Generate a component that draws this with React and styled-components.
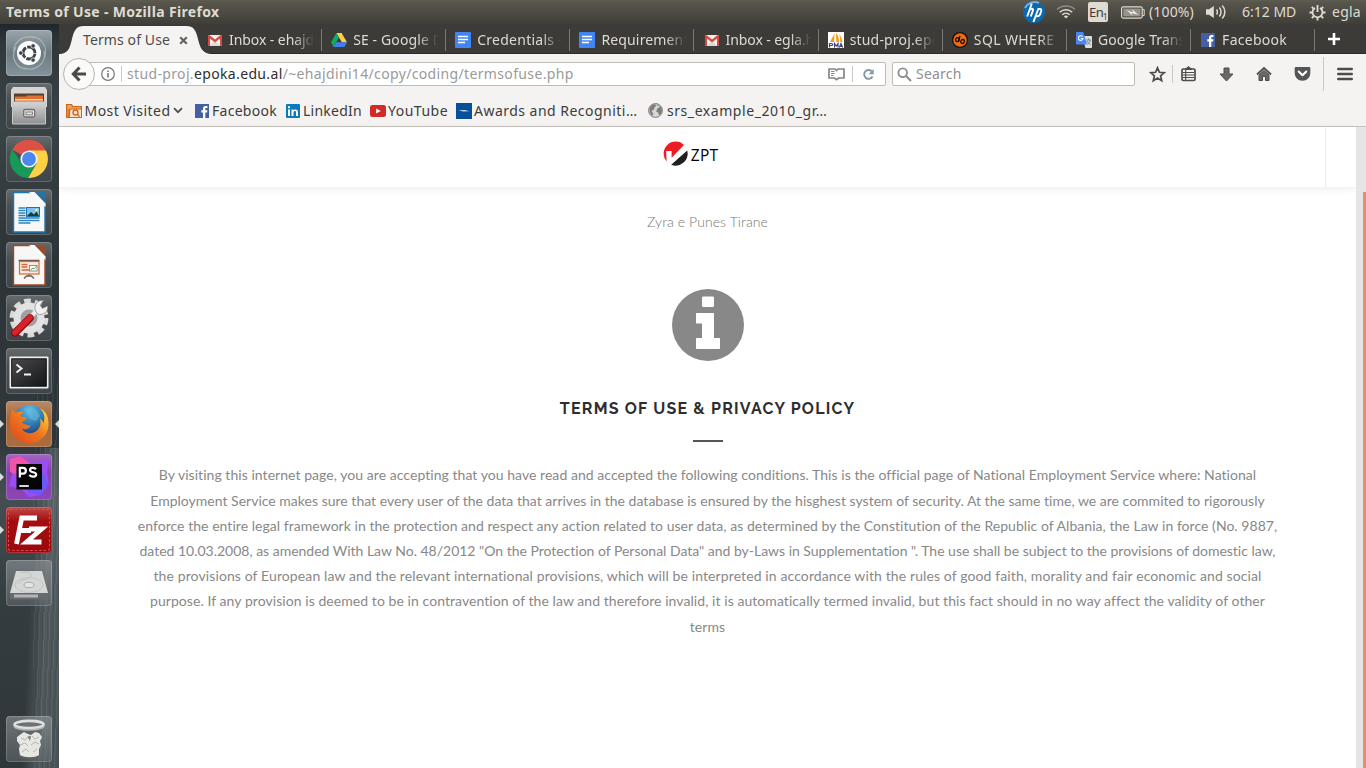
import React from "react";
import styled, { createGlobalStyle, css } from "styled-components";

const UI = `"Noto Sans", "Open Sans", sans-serif`;

const GlobalStyle = createGlobalStyle`
  * { box-sizing: border-box; }
  body { margin: 0; overflow: hidden; background: #fff; }
  svg { display: block; flex: none; }
`;

/* ---------- Shell ---------- */

const Desktop = styled.div`
  width: 1366px;
  height: 768px;
  display: flex;
  flex-direction: column;
  font: 14px/20px ${UI};
  color: #3c3c3c;
`;

const MenuBar = styled.header`
  height: 24px;
  display: flex;
  align-items: center;
  padding: 0 5px 0 6px;
  background: linear-gradient(#5f5d51 0, #57554b 3px, #3f3e39 100%);
  color: #dfdbd2;
`;

const WindowTitle = styled.h1`
  flex: 1;
  margin: 0;
  font: 700 14px/24px ${UI};
  letter-spacing: 0.35px;
`;

const Indicator = styled.div`
  display: flex;
  align-items: center;
  gap: ${(p) => p.$gap || 0}px;
  width: ${(p) => p.$w}px;
  height: 24px;
  white-space: nowrap;
  letter-spacing: ${(p) => p.$ls || 0}px;
`;

const KeyboardBadge = styled.span`
  width: 20px;
  height: 20px;
  border-radius: 2px;
  background: #dfdbd2;
  color: #3c3b37;
  font: 13px/20px ${UI};
  letter-spacing: -0.6px;
  padding-left: 1px;
  sub {
    font-size: 8px;
    line-height: 0;
    vertical-align: -3px;
  }
`;

const Body = styled.div`
  flex: 1;
  display: flex;
  min-height: 0;
`;

/* ---------- Launcher ---------- */

const Launcher = styled.nav`
  width: 59px;
  display: flex;
  flex-direction: column;
  gap: 7px;
  padding: 6px 7px 6px 6px;
  background:
    repeating-linear-gradient(92deg, rgba(255, 255, 255, 0.06) 0 1px, transparent 1px 3px, rgba(0, 0, 0, 0.08) 3px 4px, transparent 4px 5px) 100% 100% / 26px 400px no-repeat,
    linear-gradient(93deg, transparent 0 50%, rgba(125, 135, 138, 0.4) 72%, rgba(110, 120, 123, 0.42) 100%) 0 100% / 100% 320px no-repeat,
    linear-gradient(#20272a 0, #30383b 20px, #3a4346 100px, #2c3437 240px, #30383b 420px, #454f52 470px, #343c40 580px, #2f373a 100%);
`;

const tileTones = {
  glass: "linear-gradient(#666b6d 0, #4a5154 35%, #3f464a 100%)",
  dash: "linear-gradient(#9aa5aa, #6d7b81 50%, #84949a)",
  orange: "linear-gradient(#b98a66, #a4683b 40%, #a96d3f)",
  purple: "linear-gradient(#a068c0, #8740ad 40%, #8c46b5)",
  red: "linear-gradient(#c14a4a, #a40d10 30%, #9a090d)",
  clear: "linear-gradient(rgba(150, 156, 158, 0.6), rgba(105, 112, 115, 0.5))",
};

const Tile = styled.div`
  position: relative;
  width: 46px;
  height: 46px;
  flex: none;
  display: grid;
  place-items: center;
  border-radius: 4px;
  border: 1px solid rgba(255, 255, 255, 0.18);
  background: ${(p) => tileTones[p.$tone || "glass"]};
  background-origin: border-box;
  ${(p) => p.$last && css`margin-top: auto;`}
`;

const Pip = styled.i`
  position: absolute;
  top: 18px;
  ${(p) => (p.$right ? "right: -8px;" : "left: -7px;")}
  border: 4px solid transparent;
  border-${(p) => (p.$right ? "right" : "left")}: 4px solid #d9dcdc;
  ${(p) => (p.$right ? "border-left: 0;" : "border-right: 0;")}
`;

/* ---------- Browser ---------- */

const Browser = styled.main`
  flex: 1;
  min-width: 0;
  display: flex;
  flex-direction: column;
`;

const TabStrip = styled.div`
  height: 30px;
  display: flex;
  align-items: center;
  padding-left: 14px;
  background: #3c3b37;
  border-bottom: 1px solid #2c2b28;
  color: #dfdbd2;
`;

const ActiveTab = styled.div`
  position: relative;
  width: 124.8px;
  height: 30px;
  display: flex;
  align-items: center;
  gap: 9px;
  padding: 3px 0 0 10px;
  color: #4c4c4c;
  letter-spacing: 0.11px;
  white-space: nowrap;
  > svg:first-child {
    position: absolute;
    left: -14px;
    top: 1px;
  }
  > span,
  > svg {
    position: relative;
  }
`;

const Tab = styled.div`
  width: 124.15px;
  height: 22px;
  margin-top: 2px;
  display: flex;
  align-items: center;
  gap: 6px;
  padding-left: 9.2px;
  border-right: 1px solid #7a7872;
`;

const TabLabel = styled.span`
  flex: 1;
  overflow: hidden;
  white-space: nowrap;
  letter-spacing: ${(p) => p.$ls}px;
  margin-right: 7px;
  mask-image: linear-gradient(90deg, #000 calc(100% - 20px), transparent);
`;

const NewTab = styled.div`
  width: 37px;
  display: grid;
  place-items: center;
`;

const Toolbar = styled.div`
  height: 40px;
  display: flex;
  align-items: center;
  padding-left: 4px;
  background: #f4f3f1;
`;

const BackButton = styled.div`
  width: 32px;
  height: 32px;
  flex: none;
  display: grid;
  place-items: center;
  border-radius: 50%;
  border: 1px solid #b8b4ae;
  background: #fafaf9;
  z-index: 1;
`;

const Field = styled.div`
  height: 24px;
  display: flex;
  align-items: center;
  border: 1px solid #bfbbb5;
  border-radius: 2px;
  background: #fff;
  white-space: nowrap;
`;

const UrlField = styled(Field)`
  width: 799px;
  margin: 0 6px 0 -8px;
  padding: 0 10px 0 13px;
`;

const SearchField = styled(Field)`
  width: 243px;
  gap: 4px;
  padding-left: 4px;
  color: #8f8f8f;
  letter-spacing: 0.2px;
`;

const Url = styled.span`
  flex: 1;
  color: #9a9a9a;
  letter-spacing: 0.35px;
  b {
    font-weight: 400;
    color: #2e2e2e;
  }
`;

const Rule = styled.i`
  width: 1px;
  height: ${(p) => p.$h}px;
  margin: 0 ${(p) => p.$r}px 0 ${(p) => p.$l}px;
  background: #cbc8c3;
  flex: none;
`;

const Tools = styled.div`
  display: flex;
  align-items: center;
  padding-left: 3px;
`;

const Tool = styled.div`
  width: 38px;
  display: grid;
  place-items: center;
  color: #4c4c4c;
`;

const BookmarkBar = styled.div`
  height: 33px;
  display: flex;
  align-items: center;
  padding: 1px 0 0 7px;
  background: #f4f3f1;
  border-bottom: 1px solid #c8c3bd;
`;

const Bookmark = styled.div`
  width: ${(p) => p.$w}px;
  display: flex;
  align-items: center;
  gap: ${(p) => p.$gap || 2}px;
  white-space: nowrap;
  letter-spacing: ${(p) => p.$ls}px;
`;

/* ---------- Page ---------- */

const Viewport = styled.div`
  flex: 1;
  min-height: 0;
  display: flex;
  background: #fff;
`;

const Page = styled.div`
  width: 1297px;
  display: flex;
  flex-direction: column;
  align-items: center;
`;

const SiteHeader = styled.div`
  width: 1297px;
  height: 60px;
  display: flex;
  padding-right: 30px;
  box-shadow: 0 2px 8px rgba(0, 0, 0, 0.08);
`;

const Brand = styled.div`
  flex: 1;
  display: flex;
  justify-content: center;
  gap: 3px;
  padding: 14px 0 0 113px;
  padding-left: 0;
  border-right: 1px solid #ebebeb;
  color: #000;
  font: 15.5px/28px "Open Sans", sans-serif;
  letter-spacing: 0.2px;
  > svg {
    margin-left: -3px;
  }
`;

const Tagline = styled.p`
  margin: 22px 0 0;
  font: 300 14px/25px Lato, sans-serif;
  letter-spacing: 0.09px;
  color: #777;
`;

const InfoMark = styled.div`
  margin-top: 55px;
`;

const Heading = styled.h2`
  margin: 36px 0 0;
  font: 700 16px/24px Raleway, Lato, sans-serif;
  letter-spacing: 1.22px;
  color: #2e2e2e;
`;

const Divider = styled.i`
  width: 30px;
  height: 2px;
  margin-top: 19px;
  background: #555;
`;

const Terms = styled.p`
  margin: 20.3px 0 0;
  font: 400 14px/25.2px Lato, sans-serif;
  color: #888;
  text-align: center;
`;

const Line = styled.span`
  display: block;
  white-space: nowrap;
  letter-spacing: ${(p) => p.$ls}px;
`;

const ScrollTrack = styled.div`
  width: 10px;
  padding: 65px 0 0 7px;
  background: #e5e5e5;
`;

const ScrollThumb = styled.div`
  height: 100%;
  background: #ef8c63;
`;

/* ---------- Icons ---------- */

const Gmail = () => (
  <svg width="16" height="16" viewBox="0 0 16 16">
    <rect x="1" y="3" width="14" height="11" rx="1" fill="#f1f0ee" />
    <path d="M3 14 8 9l5 5z" fill="#dcdad7" />
    <path d="M1 4v9.2c0 .5.3.8.8.8H3V6.6l5 4 5-4V14h1.200c.5 0 .8-.3.8-.8V4c0-1-1-1.300-1.700-.8L8 7.500 2.700 3.200C2 2.700 1 3 1 4z" fill="#d54b3d" />
  </svg>
);

const Drive = () => (
  <svg width="16" height="16" viewBox="0 0 16 16">
    <path d="M5.400 1h5.200L16 10.300h-5.200z" fill="#ffcf48" />
    <path d="M5.400 1 0 10.300 2.600 15 8 5.600z" fill="#11a861" />
    <path d="M5.300 10.300H16L13.400 15H2.600z" fill="#3f7ff0" />
  </svg>
);

const Docs = () => (
  <svg width="16" height="16" viewBox="0 0 16 16">
    <rect width="16" height="16" rx="1" fill="#4285f4" />
    <path d="M3 4.500h10M3 7.500h10M3 10.500h7" stroke="#fff" strokeWidth="1.300" />
  </svg>
);

const Pma = () => (
  <svg width="16" height="16" viewBox="0 0 16 16">
    <rect width="16" height="16" fill="#fff" />
    <path d="M6.500 1.500 2 10h4zM8 1l.3 9H11c0-4-1-7-3-9zM11 2c1 3 1.500 5 1.200 8H14.500c-.3-3-1.500-6-3.500-8z" fill="#f89c0e" />
    <path d="M1.500 15.500v-4h2c1.500 0 1.500 2 0 2h-2M6.500 15.500v-4l1.700 2.500L10 11.500v4M11.300 15.500l1.700-4 1.700 4M12 14.300h2" fill="none" stroke="#44447c" strokeWidth="1.200" />
  </svg>
);

const Sql = () => (
  <svg width="16" height="16" viewBox="0 0 16 16">
    <circle cx="8" cy="8" r="7.400" fill="#f26a10" stroke="#111" strokeWidth="1.200" />
    <g fill="none" stroke="#1a0c04" strokeWidth="1.300">
      <ellipse cx="5.300" cy="7.600" rx="1.700" ry="2" transform="rotate(25 5.300 7.600)" />
      <ellipse cx="10.600" cy="9.500" rx="1.700" ry="2" transform="rotate(25 10.600 9.500)" />
      <path d="m6.600 9.800 1.400-6" />
    </g>
  </svg>
);

const Translate = () => (
  <svg width="16" height="16" viewBox="0 0 16 16">
    <path d="M6 4h9.300c.4 0 .7.300.7.700v10.600c0 .4-.3.7-.7.700H9.500z" fill="#dcdcdc" />
    <path d="M10 8h5M12.500 6.500V8M14.300 8c-.5 2-1.500 3.500-3 4.500M11 9c.6 1.500 1.800 2.700 3.500 3.500" stroke="#6b8794" strokeWidth="1" fill="none" />
    <path d="M.7 0h6.600L11 12.500H.7c-.4 0-.7-.3-.7-.7V.7C0 .3.300 0 .7 0z" fill="#4a86f0" />
    <path d="M6.500 4.600A2.300 2.300 0 1 0 7 6.500H4.800" stroke="#fff" strokeWidth="1.100" fill="none" />
  </svg>
);

const FacebookMark = () => (
  <svg width="16" height="16" viewBox="0 0 16 16">
    <rect x="1" y="1" width="14" height="14" fill="#4560a0" />
    <path d="M9 15V9.500H7.300V7.300H9V5.800C9 4 10 3 11.800 3H13.400v2.100h-1.200c-.7 0-.9.300-.9.900v1.300h2.100l-.3 2.200h-1.800V15z" fill="#fff" />
  </svg>
);

const LinkedInMark = () => (
  <svg width="14" height="14" viewBox="0 0 14 14">
    <rect width="14" height="14" rx="1" fill="#0b7ab8" />
    <path d="M2 5.500h2V12H2zM2 2.300h2v2H2zM5.500 5.500h1.900v.9c1-1.600 4.600-1.500 4.600 1.600v4h-2V8.500c0-2-2.500-1.700-2.500.1V12h-2z" fill="#fff" />
  </svg>
);

const YouTubeMark = () => (
  <svg width="16" height="14" viewBox="0 0 16 14">
    <rect y="1" width="16" height="12" rx="2.500" fill="#d12b27" />
    <path d="m6.200 4.500 4.600 2.500-4.600 2.500z" fill="#fff" />
  </svg>
);

const AwardMark = () => (
  <svg width="16" height="16" viewBox="0 0 16 16">
    <rect width="16" height="16" fill="#08509c" />
    <path d="M2.500 7.300 9 7l4.500 1.300L7 8.500z" fill="#c3d7ec" />
  </svg>
);

const GlobeMark = () => (
  <svg width="15" height="15" viewBox="0 0 15 15">
    <circle cx="7.500" cy="7.500" r="6.900" fill="#d6d6d6" stroke="#777" strokeWidth="1" />
    <path d="M2 4.500C3 2.500 5 1.300 7 1.200l1.500 1.600-2 1.500-.3 2L3.500 8l1.800 2.700-.6 2C2.500 11.500.8 8.500 2 4.500zM9.500 5.500l3-2.300c1.500 2 1.900 5 .6 7.300l-2 1.700-1.200-3-1.900-.8zM9 1.500l2 .9-1 1z" fill="#7c7c7c" />
  </svg>
);

const FolderMark = () => (
  <svg width="16" height="16" viewBox="0 0 16 16" fill="none" stroke="#c9671d">
    <path d="M.6 1.500h5l1 2h8.800v11H.6z" fill="#e9a25c" strokeWidth="1.200" />
    <path d="M3 14.500 4 6h11.500v8.500z" fill="#fbe3c8" />
    <circle cx="9.500" cy="9.500" r="2.500" strokeWidth="1.300" />
    <path d="m11.500 11.500 2 2M3 6v8" strokeWidth="1.300" />
  </svg>
);

const HpMark = () => (
  <svg width="22" height="22" viewBox="0 0 22 22">
    <circle cx="11" cy="11" r="11" fill="#0c68ad" />
    <path d="M2 7A11 11 0 0 1 16 2" stroke="#6fb1df" strokeWidth="2" fill="none" />
    <path d="M8.800 2.500 4.200 15.500M6.600 9.200c2-2.300 4-1.600 3.300.4l-2.100 5.900M15.500 7.500 10.400 21M14.800 8h2c1.600 0 1.700 1.200 1.300 2.400l-1 3c-.4 1.200-1.100 1.800-2.500 1.800h-1.800" fill="none" stroke="#fff" strokeWidth="1.900" />
  </svg>
);

const Wifi = () => (
  <svg width="20" height="16" viewBox="0 0 20 16" fill="none">
    <path d="M1 5.500C6 .8 14 .8 19 5.500" stroke="#8f8c83" strokeWidth="1.500" />
    <path d="M3.700 8.200c3.600-3.300 9-3.300 12.600 0M6.200 10.700c2.200-2 5.400-2 7.600 0" stroke="#dfdbd2" strokeWidth="1.500" />
    <path d="m10 14.500-2.200-2.200c1.300-1 3.100-1 4.400 0z" fill="#dfdbd2" />
  </svg>
);

const Battery = () => (
  <svg width="24" height="13" viewBox="0 0 24 13" fill="none">
    <rect x=".6" y=".9" width="20.600" height="11.200" rx="1.500" stroke="#dfdbd2" strokeWidth="1.200" />
    <rect x="2.300" y="2.600" width="17.200" height="7.800" fill="#97948b" />
    <path d="M21.500 3.500h1.700v6h-1.700" stroke="#dfdbd2" />
    <path d="m5.500 4 6.500 2.600-.7-3.300 6 5.700-6.400-2 .6 2.500z" fill="#f0ede6" />
  </svg>
);

const Volume = () => (
  <svg width="21" height="16" viewBox="0 0 21 16" fill="none">
    <path d="M0 5.300h3L7.800 2v12L3 10.700H0z" fill="#dfdbd2" />
    <path d="M10.500 5.500c1.200 1.300 1.200 3.700 0 5M13.300 3.500c2.300 2.300 2.300 6.700 0 9M16.200 1.500c3.500 3.500 3.500 9.500 0 13" stroke="#dfdbd2" strokeWidth="1.500" />
  </svg>
);

const Power = () => (
  <svg width="17" height="17" viewBox="0 0 17 17" fill="none" stroke="#dfdbd2">
    <path d="M6 4a5 5 0 1 0 5 0" strokeWidth="1.800" />
    <path d="M8.500 1v7" strokeWidth="1.800" />
    <path d="M3.500 8.500H.5M16.500 8.500h-3M4.900 12.100l-2.100 2.100M12.100 12.100l2.100 2.100M8.500 13.500v3M4.700 4.800 2.800 2.900M12.300 4.800l1.900-1.900" strokeWidth="1.900" />
  </svg>
);

const Plus = () => (
  <svg width="14" height="14" viewBox="0 0 14 14" stroke="#fff" strokeWidth="2.600">
    <path d="M7 1v12M1 7h12" />
  </svg>
);

const TabShape = () => (
  <svg width="154" height="29" viewBox="0 0 154 29">
    <path d="M0 29C9 28.500 10.500 24 12.500 16 15 5 17 1 25 1H127c8 0 10 4 12.500 15C141.500 24 144 28.500 153 29z" fill="#f4f3f1" />
  </svg>
);

const CloseX = () => (
  <svg width="9" height="9" viewBox="0 0 9 9" stroke="#66645f" strokeWidth="2.200">
    <path d="m1.200 1.200 6.600 6.600M7.800 1.200 1.200 7.800" />
  </svg>
);

const BackArrow = () => (
  <svg width="16" height="16" viewBox="0 0 16 16" fill="none" stroke="#4a4a4a" strokeWidth="3">
    <path d="M8.500 1.500 2.300 8l6.200 6.500M3 8h12" />
  </svg>
);

const SiteInfo = () => (
  <svg width="14" height="14" viewBox="0 0 14 14" fill="none" stroke="#777">
    <circle cx="7" cy="7" r="6.300" strokeWidth="1.200" />
    <path d="M7 6v4.500M7 3.400v1.500" strokeWidth="1.600" />
  </svg>
);

const Reader = () => (
  <svg width="17" height="14" viewBox="0 0 17 14" fill="none" stroke="#868686">
    <path d="M8.500 3.500 7 2H1v9h5.500l2 1.700 2-1.700H16V2h-6z" strokeWidth="1.700" />
    <path d="M3 4.500h3.500M3 6.500h3.500M3 8.500h2.500" />
  </svg>
);

const Reload = () => (
  <svg width="13" height="13" viewBox="0 0 13 13" fill="none">
    <path d="M9.700 3.300A4.400 4.400 0 1 0 10.500 8.500" stroke="#8497a6" strokeWidth="1.900" />
    <path d="M11.700 1v5.200H6.500z" fill="#8497a6" />
  </svg>
);

const Magnifier = () => (
  <svg width="15" height="15" viewBox="0 0 15 15" fill="none" stroke="#8f8f8f">
    <circle cx="5.700" cy="5.700" r="4.300" strokeWidth="1.900" />
    <path d="m9 9 5 5" strokeWidth="2.300" />
  </svg>
);

const Star = () => (
  <svg width="17" height="17" viewBox="0 0 17 17" fill="none" stroke="#4c4c4c" strokeWidth="1.700">
    <path d="m8.500 1.800 1.900 4.500 4.900.4-3.700 3.200 1.100 4.800-4.200-2.600-4.200 2.600 1.100-4.800-3.700-3.200 4.900-.4z" />
  </svg>
);

const Clipboard = () => (
  <svg width="15" height="16" viewBox="0 0 15 16" fill="none" stroke="#4c4c4c">
    <rect x="1" y="3" width="13" height="11.500" rx="1.200" strokeWidth="1.700" />
    <path d="M4 3.500 7.500.5 11 3.500z" fill="#4c4c4c" />
    <path d="M2 6.500h11M2 9h11M2 11.500h11M4.700 4v10" strokeWidth="1.100" />
  </svg>
);

const Download = () => (
  <svg width="15" height="15" viewBox="0 0 15 15">
    <path d="M5 1h5v6h4L7.500 14 1 7h4z" fill="#686868" stroke="#4c4c4c" />
  </svg>
);

const Home = () => (
  <svg width="16" height="16" viewBox="0 0 16 16" fill="none" stroke="#4c4c4c">
    <path d="M1 8.500 8 2l7 6.500" strokeWidth="1.900" />
    <path d="M3 9 8 4.500 13 9v5.500H9.500v-4h-3v4H3z" fill="#686868" />
  </svg>
);

const Pocket = () => (
  <svg width="17" height="16" viewBox="0 0 17 16">
    <path d="M2 1h13c.8 0 1.300.5 1.300 1.300V7c0 4.500-3.500 7.700-7.800 7.700S.7 11.500.7 7V2.300C.7 1.500 1.200 1 2 1z" fill="#555" />
    <path d="m4.700 5.500 3.800 3.700 3.800-3.700" fill="none" stroke="#fff" strokeWidth="2.100" strokeLinecap="round" strokeLinejoin="round" />
  </svg>
);

const Hamburger = () => (
  <svg width="16" height="14" viewBox="0 0 16 14" stroke="#4c4c4c" strokeWidth="2.600" strokeLinecap="round">
    <path d="M1.300 2h13.400M1.300 7h13.400M1.300 12h13.400" />
  </svg>
);

const Chevron = () => (
  <svg width="10" height="7" viewBox="0 0 10 7" fill="none" stroke="#4c4c4c" strokeWidth="1.700">
    <path d="m1 1.200 4 4 4-4" />
  </svg>
);

const ZptMark = () => (
  <svg width="25" height="25" viewBox="0 0 25 25">
    <path d="M3.600 20.500A12 12 0 0 1 21 4L8.600 16.800V10H3.200z" fill="#ed1c24" />
    <path d="M24.200 9.500A12 12 0 0 1 8.200 23.700z" fill="#231f20" />
  </svg>
);

const InfoCircle = () => (
  <svg width="72" height="72" viewBox="0 0 72 72">
    <circle cx="36" cy="36" r="36" fill="#888" />
    <g fill="#fff">
      <rect x="30" y="7.500" width="12" height="10.500" rx="1.200" />
      <path d="M25 24h16c.6 0 1 .4 1 1v24h5c.6 0 1 .4 1 1v9c0 .6-.4 1-1 1H25c-.6 0-1-.4-1-1v-9c0-.6.4-1 1-1h5V34.500h-5c-.6 0-1-.4-1-1V25c0-.6.4-1 1-1z" />
    </g>
  </svg>
);

/* Launcher artwork */

const App44 = ({ children }) => (
  <svg width="44" height="44" viewBox="0 0 44 44">{children}</svg>
);

const DashArt = () => (
  <App44>
    <g fill="none" stroke="#c4cdd1" strokeWidth="1.200" opacity=".6">
      <path d="M7 24C5 12 15 3 28 7M22 6c12-2 20 10 15 22M37 20c3 12-8 21-20 17M21 38C9 38 3 27 9 16" />
    </g>
    <circle cx="22" cy="22" r="12" fill="#fff" />
    <circle cx="22" cy="22" r="6" fill="none" stroke="#3c4448" strokeWidth="2.900" strokeDasharray="11.300 1.260" strokeDashoffset="-.6" />
    <g fill="#3c4448" stroke="#fff" strokeWidth=".7">
      <circle cx="13.800" cy="22" r="2.200" />
      <circle cx="26.100" cy="14.900" r="2.200" />
      <circle cx="26.100" cy="29.100" r="2.200" />
    </g>
  </App44>
);

const FilesArt = () => (
  <App44>
    <defs>
      <linearGradient id="cab" x1="0" y1="0" x2="0" y2="1">
        <stop offset="0" stopColor="#d5d5d5" /><stop offset="1" stopColor="#8f8f8f" />
      </linearGradient>
    </defs>
    <path d="M6 3h32l2 3v17H4V6z" fill="#d6d5d3" />
    <path d="M7 9.500h30V20H7z" fill="#55402f" />
    <path d="M8 12.500h11l1-1h16V20H8z" fill="#e0702f" />
    <path d="M8 15h28v1.500H8z" fill="#f6d3b8" />
    <path d="M5.500 18h33v22h-33z" fill="url(#cab)" stroke="#c9c9c9" />
    <rect x="16.700" y="25.500" width="11" height="7.500" rx="1.500" fill="#e8e8e8" stroke="#6d6d6d" strokeWidth="1.300" />
    <rect x="19" y="28" width="6.400" height="2.800" fill="none" stroke="#7d7d7d" />
  </App44>
);

const ChromeArt = () => (
  <App44>
    <path d="M22 22 5.300 12.500A19 19 0 0 1 38.700 13.500z" fill="#dd5145" />
    <path d="M22 3a19 19 0 0 1 16.700 10.500H22z" fill="#dd5145" />
    <path d="M38.900 13.500A19 19 0 0 1 21 41l8.500-14.500L22 13.500z" fill="#fdd045" />
    <path d="M5.300 12.500A19 19 0 0 0 21 41l8.400-14.700L22 22l-7.500 4z" fill="#17995a" />
    <circle cx="22" cy="22" r="8.600" fill="#f4f4f4" />
    <circle cx="22" cy="22" r="6.900" fill="#4a87ee" />
  </App44>
);

const OfficeArt = ({ tone, children }) => (
  <App44>
    <path d="M6.500 2.500h21l10.500 11V42H6.500z" fill="#f7f7f7" stroke={tone} strokeWidth="1.400" />
    <path d="M27.500 2h11v11.500z" fill={tone} opacity=".8" />
    <path d="M22 2h5.500l11 11.500V17z" fill="#fff" />
    {children}
  </App44>
);

const WriterArt = () => (
  <OfficeArt tone="#1b75b0">
    <path d="M11.500 18h7M11.500 20.500h7M11.500 23h7M11.500 25.500h7M11.500 28h21M11.500 30.500h21M11.500 33h12" stroke="#2b86c2" strokeWidth="1.300" />
    <rect x="19.500" y="17.500" width="13" height="9" fill="#7cc2ee" stroke="#1b75b0" />
    <path d="m20 26 4-4 3 2.500 2.500-3L32 26z" fill="#1f3c25" />
    <circle cx="29.500" cy="20" r="1.200" fill="#fff3a8" />
  </OfficeArt>
);

const ImpressArt = () => (
  <OfficeArt tone="#a5481f">
    <path d="M11.500 17.500h21M22 31v2M17 35.500l2.500-2.500h5l2.500 2.500" stroke="#6b5a52" strokeWidth="1.300" fill="none" />
    <rect x="12.500" y="18.500" width="19.500" height="12.500" fill="#fdeadf" stroke="#cf6a3c" strokeWidth="1.200" />
    <path d="M14.500 21.500h6M14.500 24h6M14.500 27h8" stroke="#cf6a3c" strokeWidth="1.500" />
    <rect x="22.500" y="22.500" width="7.500" height="5.500" fill="#fff" stroke="#777" strokeWidth=".8" />
    <path d="m23.500 27 2.500-2 1 .8 2.500-2.500" stroke="#3aa655" fill="none" />
  </OfficeArt>
);

const SettingsArt = () => (
  <App44>
    <circle cx="22" cy="22" r="17.200" fill="none" stroke="#dadada" strokeWidth="4.500" strokeDasharray="6.750 4.057" />
    <circle cx="22" cy="22" r="12" fill="#a0a0a0" stroke="#e2e2e2" strokeWidth="7" />
    <path d="M20 25 32 12" stroke="#ececec" strokeWidth="4.500" />
    <path d="M28.500 15c-2-6.500 2-11 8-10.500l-3.500 4.500 2.500 3.500 5-2.500c1 6-5 10-10 8z" fill="#f1f1f1" stroke="#8d8d8d" strokeWidth=".8" />
    <path d="M8 37 23 22" stroke="#8c0d12" strokeWidth="7.500" strokeLinecap="round" />
    <path d="M8 36.500 23 21.500" stroke="#d8232a" strokeWidth="5.500" strokeLinecap="round" />
  </App44>
);

const TerminalArt = () => (
  <App44>
    <defs>
      <linearGradient id="term" x1="0" y1="0" x2="1" y2="1">
        <stop offset="0" stopColor="#4a4b4c" /><stop offset="1" stopColor="#141516" />
      </linearGradient>
    </defs>
    <rect x="2.500" y="7.500" width="39" height="32" rx="1" fill="#ededed" />
    <rect x="4.700" y="9.800" width="34.600" height="27.400" fill="url(#term)" stroke="#111" />
    <path d="m9.500 15.500 5 4-5 4M17 25.500h7" fill="none" stroke="#f2f2f2" strokeWidth="1.900" />
  </App44>
);

const FirefoxArt = () => (
  <App44>
    <defs>
      <radialGradient id="sea" cx=".5" cy=".15" r=".8">
        <stop offset="0" stopColor="#5cc0ea" /><stop offset="1" stopColor="#123f7d" />
      </radialGradient>
      <linearGradient id="fox" x1="0" y1="1" x2="1" y2="0">
        <stop offset="0" stopColor="#df431d" /><stop offset=".55" stopColor="#ef7c1f" /><stop offset="1" stopColor="#ffe24a" />
      </linearGradient>
    </defs>
    <circle cx="22.500" cy="19.500" r="16.500" fill="url(#sea)" />
    <path d="M17 7c5-2 10-1 13 2l3 5-4 5-6-2z" fill="#67b9dd" opacity=".55" />
    <path d="M5.500 7c1 2 2 3 3.500 3.500 3-1.500 6-1 7.500-.5-2 1.300-3 3-2.500 4.500 2 .5 5 .5 5.500 1.500-.3 2.500-4 3-4.500 5 4 1 5 3.500 9 2.300-2 3.700-6 4.700-9 3.200 2 5 10 6.500 15 2 4-4 4-8 3-12 2 1.500 3 3 3.300 5C38.500 15 37 10 33 6.500 39 9 42 15 41.500 23 41 33.500 33 41 22.500 41 11 41 3 33 3 23 3 17 3.500 11 5.500 7z" fill="url(#fox)" />
  </App44>
);

const PhpStormArt = () => (
  <App44>
    <path d="M3 4 13 1l13 7 16-4-2 13 2 12-8 11-12 2-8-8L2 31l3-12z" fill="#9b4cf5" />
    <path d="M3 4 13 1l10 7-12 12-8-3z" fill="#f053a8" />
    <path d="m34 14 8 15-8 11-14-3z" fill="#6c57f7" />
    <rect x="9.500" y="9" width="25.500" height="25.500" fill="#050505" />
    <path d="M12.800 22.500V12.800h3.200c3.800 0 3.800 5.900 0 5.900h-3.200M29 14.200c-1.700-2-6-1.800-6 .8 0 3 6.200 1.600 6.200 4.600 0 2.600-4.700 2.800-6.900.4" fill="none" stroke="#fff" strokeWidth="2.200" />
    <path d="M12.300 31h9.500" stroke="#fff" strokeWidth="1.700" />
  </App44>
);

const FileZillaArt = () => (
  <App44>
    <rect x="1.500" y="1.500" width="41" height="41" rx="2" fill="none" stroke="#d8504f" strokeWidth="1.100" strokeDasharray="2.500 2" />
    <path d="M9.500 36 14.700 10H30M12.500 22.500H24M22 21h12.700L19.500 34H34.500" fill="none" stroke="#fff" strokeWidth="4.800" />
  </App44>
);

const DiskArt = () => (
  <App44>
    <path d="M9 10h26l6 22H3z" fill="#d5d6d6" />
    <path d="M3 32h38v5c0 1-.5 1.500-1.500 1.500h-35C3.500 38.500 3 38 3 37z" fill="#686b6c" />
    <path d="M7 33.500h24v3H7z" fill="#b3b5b5" />
    <ellipse cx="22" cy="24" rx="14" ry="7.500" fill="none" stroke="#c3c5c5" />
    <ellipse cx="22" cy="24" rx="5" ry="2.700" fill="#e4e4e4" stroke="#a9abab" />
    <path d="M13 12c8-3 15 1 9 5-6 3-10 1-10 6" fill="none" stroke="#bfc1c1" />
  </App44>
);

const TrashArt = () => (
  <App44>
    <path d="m9 10 3 30c3 2 17 2 20 0l3-30z" fill="#5c6365" opacity=".75" />
    <path d="m10 20 4-3 3-2 4 2 3 1 4-3 4 1 3 4-2 4 1 4-2 4v6c-4 3-14 3-19 0l-1-6 1-4-3-4z" fill="#e6e6e3" />
    <path d="m14 21 4 2 3-3M25 19l3 3 4-2M13 28l5-2 3 3M24 28l4-3 4 2M15 35l4-3 3 3M26 35l4-3" stroke="#b4b4b1" fill="none" />
    <path d="M20.500 19.500 23 24l1-5z" fill="#777d7e" />
    <ellipse cx="22" cy="7.500" rx="14.500" ry="3.600" fill="#6b7274" stroke="#dfe1e1" strokeWidth="2.600" />
    <path d="M7 9.500c3 4.500 27 4.500 30 0" stroke="#b5b8b8" strokeWidth="1.500" fill="none" />
  </App44>
);

/* ---------- Data ---------- */

const launcher = [
  { Art: DashArt, tone: "dash" },
  { Art: FilesArt },
  { Art: ChromeArt },
  { Art: WriterArt },
  { Art: ImpressArt },
  { Art: SettingsArt },
  { Art: TerminalArt },
  { Art: FirefoxArt, tone: "orange", left: true, right: true },
  { Art: PhpStormArt, tone: "purple", left: true },
  { Art: FileZillaArt, tone: "red", left: true },
  { Art: DiskArt, tone: "clear" },
  { Art: TrashArt, tone: "clear", last: true },
];

const tabs = [
  { Icon: Gmail, label: "Inbox - ehajd", ls: -0.07 },
  { Icon: Drive, label: "SE - Google D", ls: 0.13 },
  { Icon: Docs, label: "Credentials -", ls: 0.25 },
  { Icon: Docs, label: "Requirement", ls: 0.15 },
  { Icon: Gmail, label: "Inbox - egla.h", ls: -0.08 },
  { Icon: Pma, label: "stud-proj.epo", ls: 0.17 },
  { Icon: Sql, label: "SQL WHERE", ls: 0.38 },
  { Icon: Translate, label: "Google Trans", ls: 0.05 },
  { Icon: FacebookMark, label: "Facebook", ls: 0.28 },
];

const lines = [
  ["By visiting this internet page, you are accepting that you have read and accepted the following conditions. This is the official page of National Employment Service where: National", 0.048],
  ["Employment Service makes sure that every user of the data that arrives in the database is ensured by the hisghest system of security. At the same time, we are commited to rigorously", 0.012],
  ["enforce the entire legal framework in the protection and respect any action related to user data, as determined by the Constitution of the Republic of Albania, the Law in force (No. 9887,", 0.043],
  ["dated 10.03.2008, as amended With Law No. 48/2012 \"On the Protection of Personal Data\" and by-Laws in Supplementation \". The use shall be subject to the provisions of domestic law,", -0.012],
  ["the provisions of European law and the relevant international provisions, which will be interpreted in accordance with the rules of good faith, morality and fair economic and social", 0.112],
  ["purpose. If any provision is deemed to be in contravention of the law and therefore invalid, it is automatically termed invalid, but this fact should in no way affect the validity of other", 0.064],
  ["terms", 0.1],
];

export default function App() {
  return (
    <Desktop>
      <GlobalStyle />
      <MenuBar>
        <WindowTitle>Terms of Use - Mozilla Firefox</WindowTitle>
        <Indicator $w={33}><HpMark /></Indicator>
        <Indicator $w={32}><Wifi /></Indicator>
        <Indicator $w={33}><KeyboardBadge>En<sub>1</sub></KeyboardBadge></Indicator>
        <Indicator $w={85} $gap={4} $ls={0.15}><Battery />(100%)</Indicator>
        <Indicator $w={36}><Volume /></Indicator>
        <Indicator $w={67}>6:12 MD</Indicator>
        <Indicator $w={52} $gap={6} $ls={0.25}><Power />egla</Indicator>
      </MenuBar>
      <Body>
        <Launcher>
          {launcher.map(({ Art, tone, left, right, last }, i) => (
            <Tile key={i} $tone={tone} $last={last}>
              <Art />
              {left && <Pip />}
              {right && <Pip $right />}
            </Tile>
          ))}
        </Launcher>
        <Browser>
          <TabStrip>
            <ActiveTab>
              <TabShape />
              <span>Terms of Use</span>
              <CloseX />
            </ActiveTab>
            {tabs.map(({ Icon, label, ls }) => (
              <Tab key={label}>
                <Icon />
                <TabLabel $ls={ls}>{label}</TabLabel>
              </Tab>
            ))}
            <NewTab><Plus /></NewTab>
          </TabStrip>
          <Toolbar>
            <BackButton><BackArrow /></BackButton>
            <UrlField>
              <SiteInfo />
              <Rule $h={16} $l={6} $r={5} />
              <Url>stud-proj.<b>epoka.edu.al</b>/~ehajdini14/copy/coding/termsofuse.php</Url>
              <Reader />
              <Rule $h={16} $l={7} $r={9} />
              <Reload />
            </UrlField>
            <SearchField><Magnifier />Search</SearchField>
            <Tools>
              <Tool><Star /></Tool>
              <Rule $h={18} $l={-4} $r={-4} />
              <Tool><Clipboard /></Tool>
              <Tool><Download /></Tool>
              <Tool><Home /></Tool>
              <Tool><Pocket /></Tool>
              <Rule $h={34} $l={2} $r={2} />
              <Tool><Hamburger /></Tool>
            </Tools>
          </Toolbar>
          <BookmarkBar>
            <Bookmark $w={128} $gap={2.500} $ls={0.46}><FolderMark />Most Visited<Chevron /></Bookmark>
            <Bookmark $w={92} $ls={0.28}><FacebookMark />Facebook</Bookmark>
            <Bookmark $w={84} $gap={3} $ls={0.25}><LinkedInMark />LinkedIn</Bookmark>
            <Bookmark $w={86} $ls={0.49}><YouTubeMark />YouTube</Bookmark>
            <Bookmark $w={192} $ls={0.48}><AwardMark />Awards and Recogniti…</Bookmark>
            <Bookmark $w={190} $gap={4} $ls={0.56}><GlobeMark />srs_example_2010_gr…</Bookmark>
          </BookmarkBar>
          <Viewport>
            <Page>
              <SiteHeader>
                <Brand><ZptMark />ZPT</Brand>
              </SiteHeader>
              <Tagline>Zyra e Punes Tirane</Tagline>
              <InfoMark><InfoCircle /></InfoMark>
              <Heading>TERMS OF USE &amp; PRIVACY POLICY</Heading>
              <Divider />
              <Terms>
                {lines.map(([text, ls]) => <Line key={text} $ls={ls}>{text}</Line>)}
              </Terms>
            </Page>
            <ScrollTrack><ScrollThumb /></ScrollTrack>
          </Viewport>
        </Browser>
      </Body>
    </Desktop>
  );
}
